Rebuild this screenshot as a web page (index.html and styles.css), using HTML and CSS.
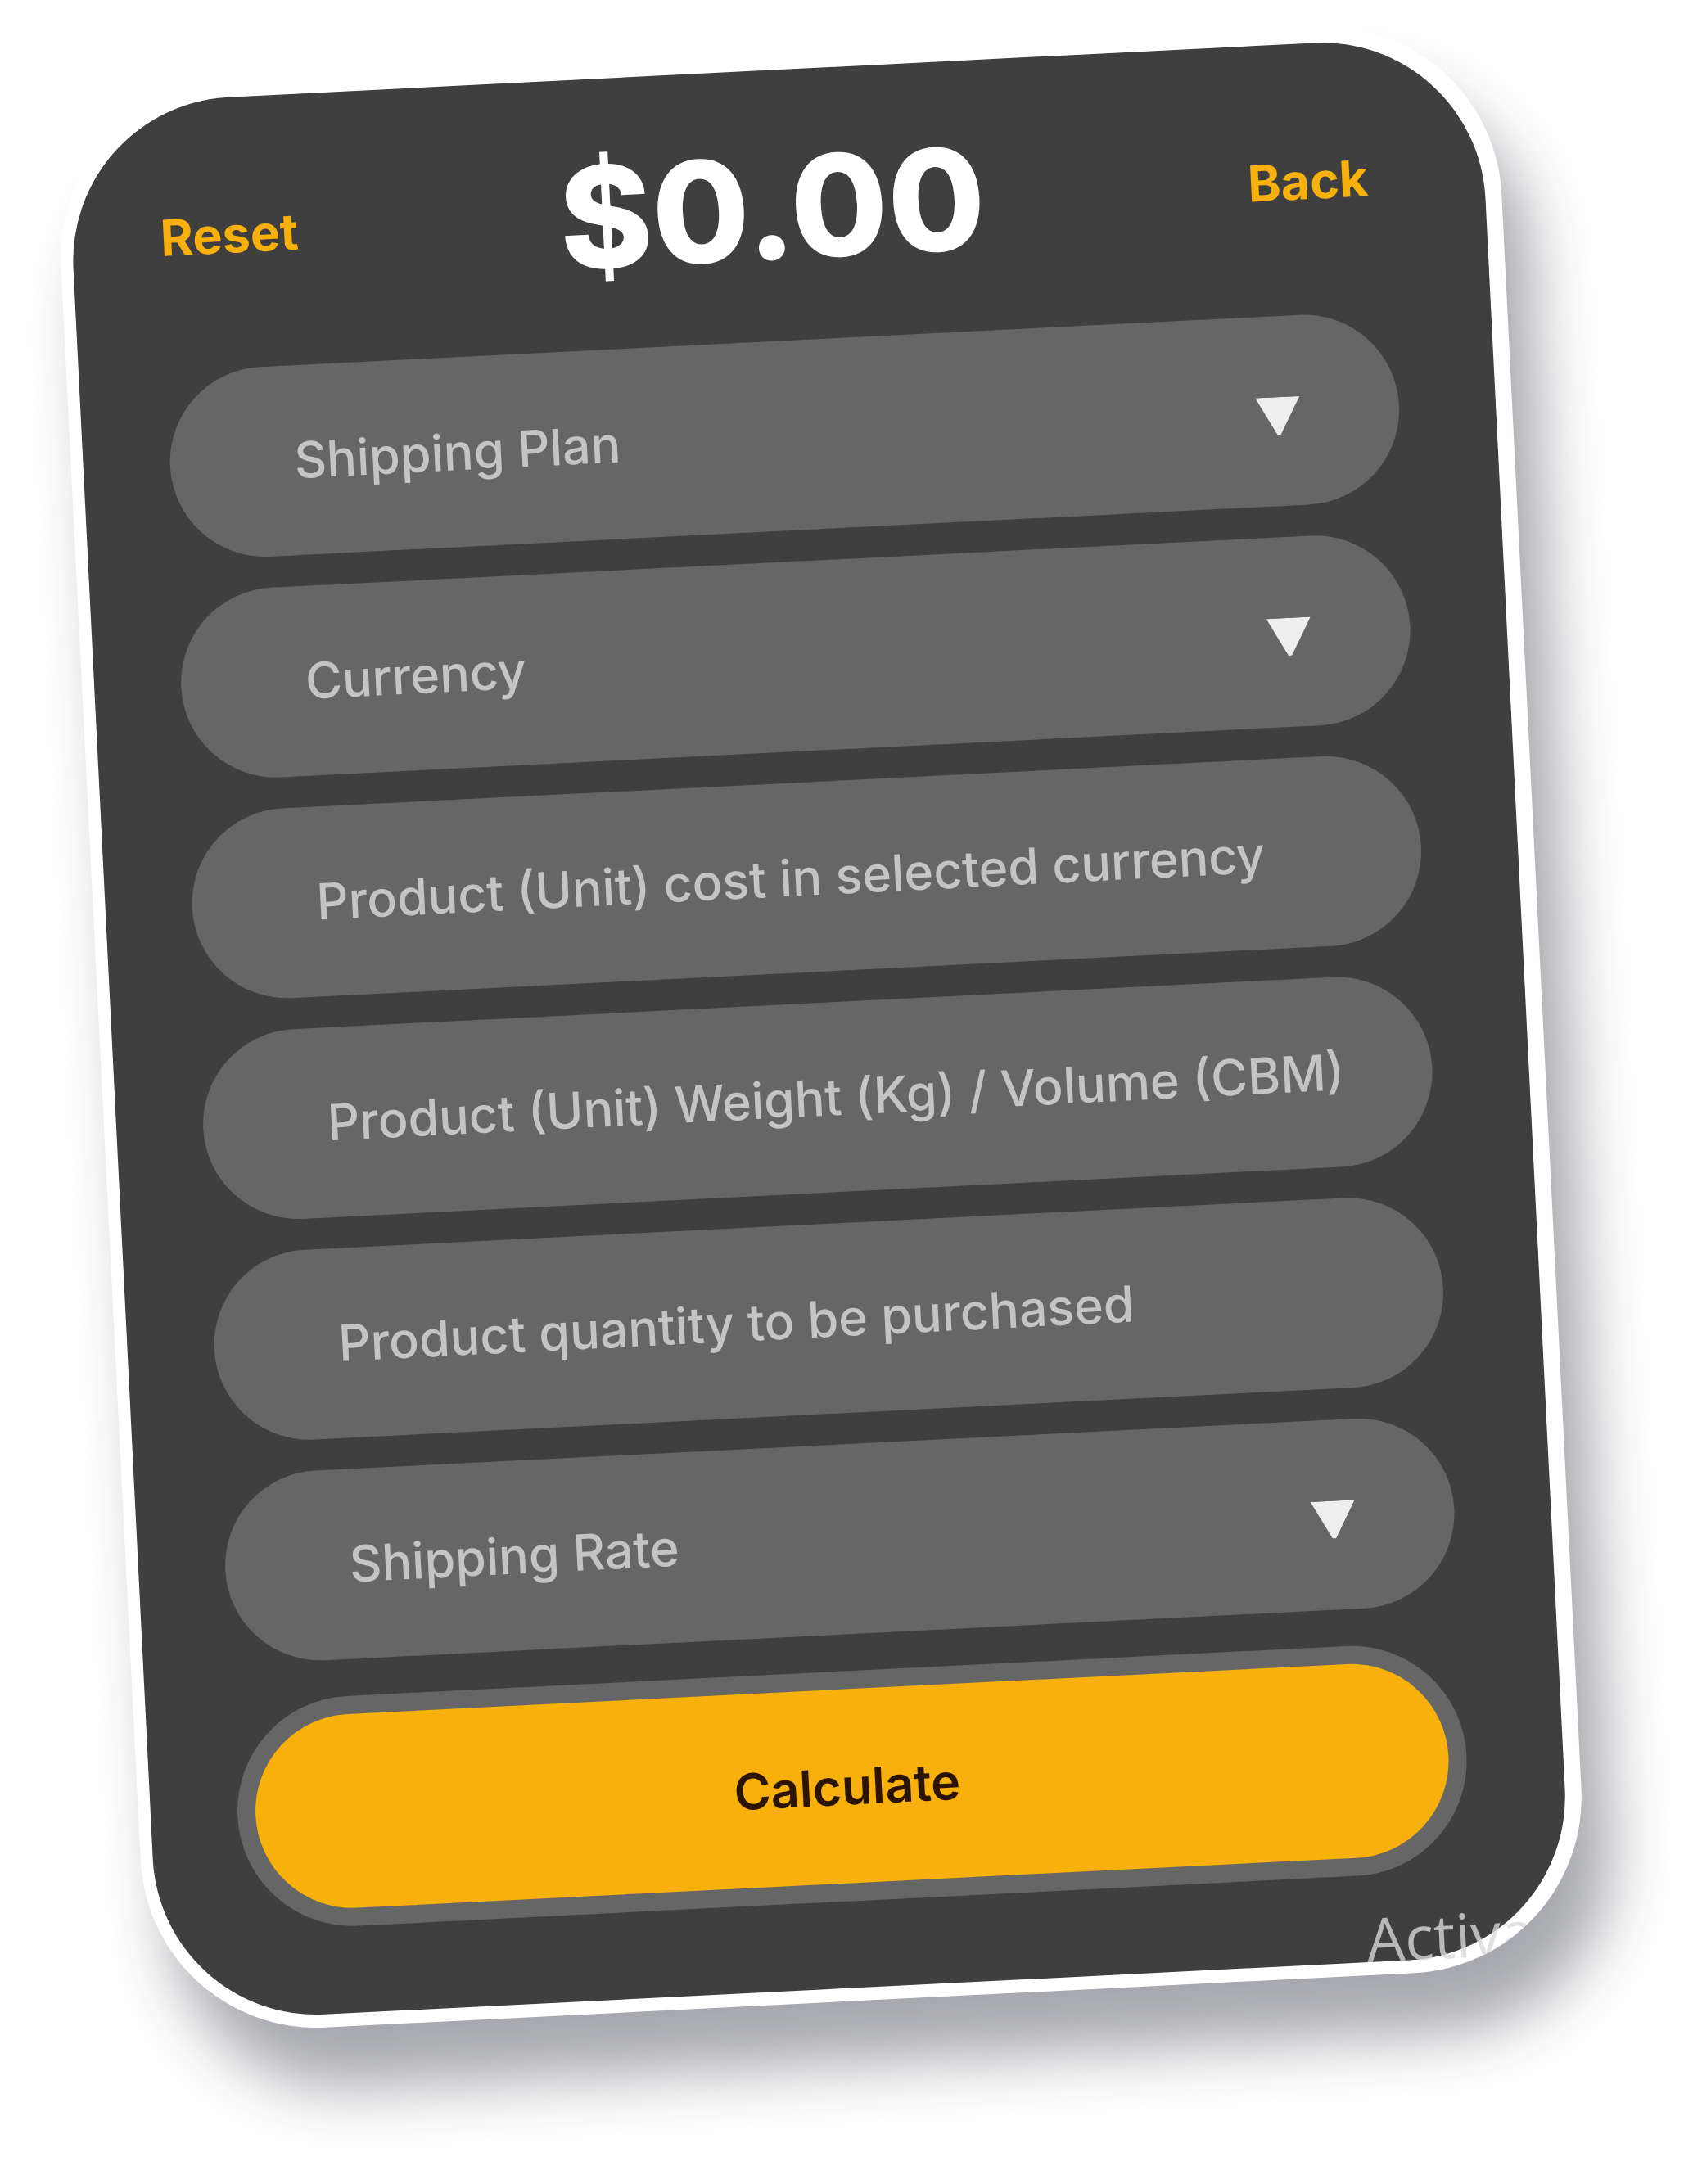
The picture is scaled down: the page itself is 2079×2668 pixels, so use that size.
FILE: index.html
```
<!DOCTYPE html>
<html lang="en">

<head>
    <meta charset="utf-8">
    <title>Shipping Calculator</title>
    <link rel="stylesheet" href="styles.css">
</head>

<body>
    <div class="card">
        <form class="calculator" onsubmit="event.preventDefault();" autocomplete="off">
            <div class="header">
                <button type="reset" class="link-button">Reset</button>
                <output class="total">$0.00</output>
                <button type="button" class="link-button back">Back</button>
            </div>

            <div class="fields">
                <div class="field">
                    <select id="plan" aria-label="Shipping Plan">
                        <option value="">Shipping Plan</option>
                    </select>
                    <svg class="arrow" viewBox="0 0 54 46"><path d="M0 0h54L29 46h-4z" /></svg>
                </div>
                <div class="field">
                    <select id="currency" aria-label="Currency">
                        <option value="">Currency</option>
                    </select>
                    <svg class="arrow" viewBox="0 0 54 46"><path d="M0 0h54L29 46h-4z" /></svg>
                </div>
                <div class="field">
                    <input type="text" id="cost" aria-label="Product (Unit) cost in selected currency"
                        placeholder="Product (Unit) cost in selected currency">
                </div>
                <div class="field">
                    <input type="text" id="weight" aria-label="Product (Unit) Weight (Kg) / Volume (CBM)"
                        placeholder="Product (Unit) Weight (Kg) / Volume (CBM)">
                </div>
                <div class="field">
                    <input type="text" id="quantity" aria-label="Product quantity to be purchased"
                        placeholder="Product quantity to be purchased">
                </div>
                <div class="field">
                    <select id="rate" aria-label="Shipping Rate">
                        <option value="">Shipping Rate</option>
                    </select>
                    <svg class="arrow" viewBox="0 0 54 46"><path d="M0 0h54L29 46h-4z" /></svg>
                </div>
            </div>

            <button type="submit" class="calculate">Calculate</button>
        </form>
        <span class="watermark">Activa</span>
    </div>
</body>

</html>
```

FILE: styles.css
```
* {
    box-sizing: border-box;
}

/* bottom padding leaves room for the card shadow */
body {
    margin: 0;
    padding: 65px 195px 220px 122px;
    background: #fff;
    font-family: Inter, "Liberation Sans", sans-serif;
}

button,
input,
select {
    font-family: inherit;
    font-size: 61px;
}

/* white frame, tilted as a whole */
.card {
    position: relative;
    padding: 19px 20px 16px 15px;
    background: #fff;
    border-radius: 215px;
    overflow: hidden;
    box-shadow: 32px 75px 75px rgba(36, 38, 50, 0.4);
    transform: rotate(-2.86deg);
}

.calculator {
    display: flex;
    flex-direction: column;
    padding: 68px 118px 106px 106px;
    background: #3f3f3f;
    border-radius: 200px;
}

.header {
    display: flex;
    justify-content: space-between;
    align-items: center;
    margin-bottom: 63px;
}

.total {
    color: #fff;
    font-size: 172px;
    font-weight: 800;
    line-height: 200px;
}

.link-button {
    padding: 0 0 0 2px;
    border: none;
    background: none;
    color: #f7b00c;
    font-weight: 700;
    cursor: pointer;
}

.back {
    padding-right: 24px;
}

.fields {
    display: grid;
    gap: 38px;
    margin-bottom: 45px;
}

.field {
    position: relative;
}

.field input,
.field select {
    display: block;
    width: 100%;
    height: 232px;
    padding: 0 80px 0 152px;
    border: none;
    border-radius: 116px;
    background: #666;
    color: #c4c4c4;
    font-weight: 500;
    appearance: none;
    outline: none;
}

.field input::placeholder {
    color: #c4c4c4;
    opacity: 1;
}

.arrow {
    position: absolute;
    top: 99px;
    right: 121px;
    width: 54px;
    height: 46px;
    fill: #eee;
    pointer-events: none;
}

.calculate {
    height: 281px;
    padding: 0 12px 0 0;
    border: 22px solid #666;
    border-radius: 141px;
    background: #f7b00c;
    color: #2b1500;
    font-weight: 600;
    cursor: pointer;
}

.watermark {
    position: absolute;
    right: 66px;
    bottom: 4px;
    color: rgba(218, 218, 218, 0.78);
    font-family: "Open Sans", "Noto Sans", sans-serif;
    font-size: 74px;
    line-height: 80px;
    pointer-events: none;
}
```
